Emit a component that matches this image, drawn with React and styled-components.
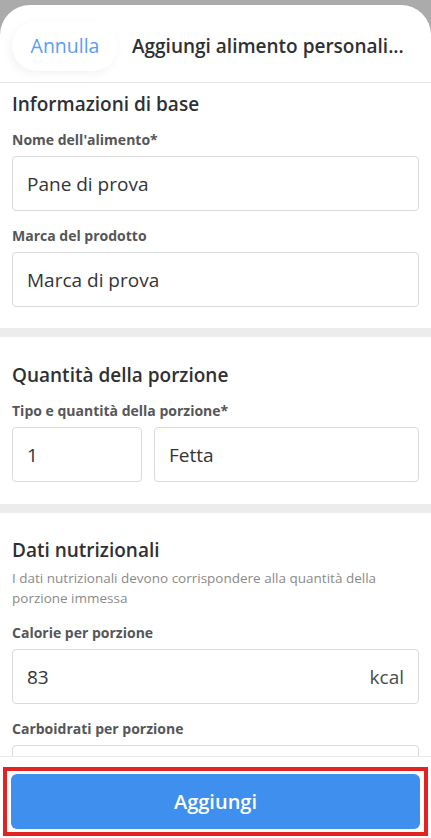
import styled, { createGlobalStyle } from "styled-components";

const GlobalStyle = createGlobalStyle`
  html, body {
    margin: 0;
    padding: 0;
    background: #ababab;
  }
  * {
    box-sizing: border-box;
  }
`;

export default function App() {
  return (
    <>
      <GlobalStyle />
      <Screen>
        <Sheet>
          <Header>
            <CancelPill>Annulla</CancelPill>
            <HeaderTitle>Aggiungi alimento personali...</HeaderTitle>
          </Header>
          <Content>
            <Section $top={9} $bottom={21}>
              <SectionTitle>Informazioni di base</SectionTitle>
              <Field label="Nome dell'alimento*" first>
                <Input>Pane di prova</Input>
              </Field>
              <Field label="Marca del prodotto">
                <Input>Marca di prova</Input>
              </Field>
            </Section>
            <Divider />
            <Section $top={26} $bottom={22}>
              <SectionTitle>Quantità della porzione</SectionTitle>
              <Field label="Tipo e quantità della porzione*" first>
                <InputRow>
                  <Input $width="130px">1</Input>
                  <Input>Fetta</Input>
                </InputRow>
              </Field>
            </Section>
            <Divider />
            <Section $top={25} $bottom={22}>
              <SectionTitle>Dati nutrizionali</SectionTitle>
              <Description>
                I dati nutrizionali devono corrispondere alla quantità della
                porzione immessa
              </Description>
              <Field label="Calorie per porzione">
                <Input>
                  83
                  <Unit>kcal</Unit>
                </Input>
              </Field>
              <Field label="Carboidrati per porzione">
                <Input />
              </Field>
            </Section>
          </Content>
          <Footer>
            <Highlight>
              <PrimaryButton>Aggiungi</PrimaryButton>
            </Highlight>
          </Footer>
        </Sheet>
      </Screen>
    </>
  );
}

function Field({ label, first, children }) {
  return (
    <FieldWrap $first={first}>
      <Label>{label}</Label>
      {children}
    </FieldWrap>
  );
}

const Screen = styled.div`
  width: 431px;
  height: 838px;
  padding-top: 5px;
  background: #ababab;
  font-family: "Open Sans", "Noto Sans", sans-serif;
  overflow: hidden;
`;

const Sheet = styled.div`
  height: 100%;
  display: flex;
  flex-direction: column;
  background: #fff;
  border-radius: 30px 30px 0 0;
  overflow: hidden;
`;

const Header = styled.div`
  height: 78px;
  flex-shrink: 0;
  display: flex;
  align-items: center;
  gap: 14px;
  padding: 0 12px;
  border-bottom: 1px solid #e6e6e6;
`;

const CancelPill = styled.button`
  width: 106px;
  height: 50px;
  padding: 0;
  margin-top: 4px;
  border: none;
  border-radius: 25px;
  background: #fff;
  box-shadow: -2px 3px 10px rgba(0, 0, 0, 0.05);
  color: #5b9def;
  font-family: inherit;
  font-size: 19.5px;
`;

const HeaderTitle = styled.div`
  margin-top: 4px;
  font-size: 19px;
  font-weight: 600;
  color: #2f3033;
  white-space: nowrap;
  overflow: hidden;
`;

const Content = styled.div`
  flex: 1;
  overflow: hidden;
`;

const Section = styled.div`
  padding: ${(p) => p.$top}px 12px ${(p) => p.$bottom}px;
`;

const SectionTitle = styled.h2`
  margin: 0;
  font-size: 19px;
  line-height: 24px;
  font-weight: 600;
  color: #2f3033;
`;

const Description = styled.p`
  margin: 6px 0 0;
  font-size: 13.5px;
  line-height: 20px;
  color: #8a8a8a;
`;

const FieldWrap = styled.div`
  margin-top: ${(p) => (p.$first ? 15 : 16)}px;
`;

const Label = styled.div`
  font-size: 14px;
  line-height: 18px;
  font-weight: 700;
  color: #555659;
  margin-bottom: 7px;
`;

const InputRow = styled.div`
  display: flex;
  gap: 12px;
`;

const Input = styled.div`
  height: 55px;
  flex: ${(p) => (p.$width ? "none" : "1")};
  width: ${(p) => p.$width || "auto"};
  display: flex;
  align-items: center;
  justify-content: space-between;
  padding: 0 14px;
  border: 1px solid #d9d9e0;
  border-radius: 4px;
  font-size: 19px;
  color: #333437;
`;

const Unit = styled.span`
  color: #4a4b4e;
`;

const Divider = styled.div`
  height: 9px;
  background: #ececec;
`;

const Footer = styled.div`
  flex-shrink: 0;
  background: #fff;
  border-top: 1px solid #e8e8ea;
  padding: 10px 3px 2px;
`;

const Highlight = styled.div`
  border: 4px solid #e32222;
  padding: 3px 4px;
`;

const PrimaryButton = styled.button`
  width: 100%;
  height: 55px;
  border: none;
  border-radius: 6px;
  background: #3e8fee;
  color: #fff;
  font-family: inherit;
  font-size: 20px;
  font-weight: 600;
`;
